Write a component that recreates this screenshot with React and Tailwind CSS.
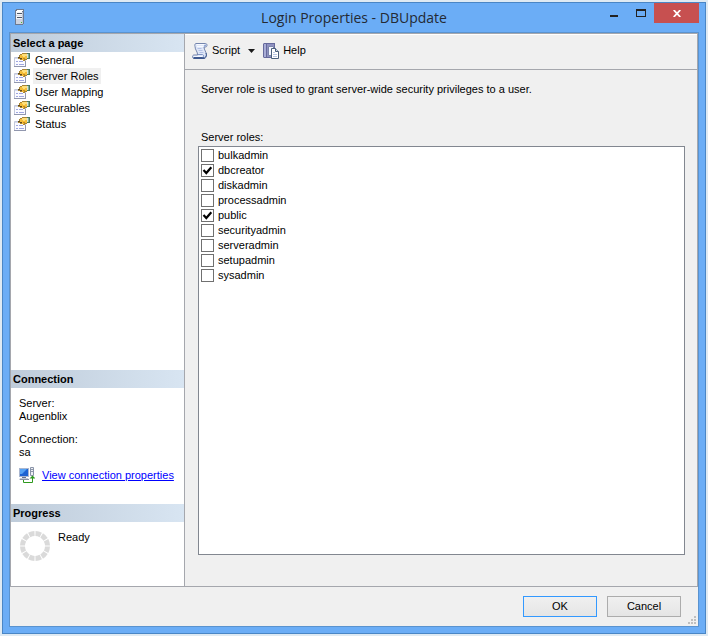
import React, { useState } from 'react';

const PAGES = ['General', 'Server Roles', 'User Mapping', 'Securables', 'Status'];

const ROLES = [
  'bulkadmin',
  'dbcreator',
  'diskadmin',
  'processadmin',
  'public',
  'securityadmin',
  'serveradmin',
  'setupadmin',
  'sysadmin',
];

function ServerIcon() {
  return (
    <svg width="9" height="16" viewBox="0 0 9 16" aria-hidden="true">
      <path d="M1 0h8v15H8v1H0V1h1z" fill="#6b7a92" />
      <path d="M2 1h6v1H7v1H1V2h1z" fill="#ffffff" />
      <path d="M1 3h6v12H1z" fill="#f1f3f8" />
      <path d="M7 3h1v12H7z" fill="#bcc5d4" />
      <path d="M2 4.500h5M2 8.500h5" stroke="#4d5768" />
      <path d="M1 6.500h6" stroke="#d5dae4" />
      <path d="M1 10h6v5H1z" fill="#cdd3e0" />
      <path d="M6 13h1v1H6z" fill="#46b52f" />
    </svg>
  );
}

function PageIcon() {
  return (
    <svg width="16" height="16" viewBox="0 0 16 16" aria-hidden="true" className="shrink-0">
      <path d="M.5 5.500h11v9H.5z" fill="#fbfbff" stroke="#c3c8da" />
      <path d="M0 14.500h12M11.500 9v6" stroke="#9197ae" />
      <path d="M1 6h4v1H1z" fill="#d5daf0" />
      <path d="M2 9.500h2M2 12.500h2" stroke="#9fa7e0" />
      <path d="M5 9.500h4M5 12.500h5" stroke="#9fa7e0" />
      <path d="M5 3h1V2h2V1h5v7h-2v1H9V8H6V7H4V5h1z" fill="#a98534" />
      <path d="M6 3h2V2h5v5h-3v1H8V7H6z" fill="#f4bd38" />
      <path d="M8 2h5v2h-2v1H9V4H8z" fill="#ffdf78" />
      <path d="M4 5h2v1H4zM6 6h2v1H6z" fill="#5d4a1c" />
      <path d="M9 6h2v1H9z" fill="#c98c1b" />
      <path d="M13 1h3v6h-3z" fill="#4b7a60" />
      <path d="M13 2h1v4h-1z" fill="#d5e4d8" />
      <path d="M14 2h1v4h-1z" fill="#86ae96" />
    </svg>
  );
}

function ScriptIcon() {
  return (
    <svg width="16" height="16" viewBox="0 0 16 16" aria-hidden="true">
      <path
        d="M4 .5h9.500c2 0 2 3.500 0 3.500h-1.500c0 3 2.500 5 2.500 8 0 2-1 3.500-2.500 3.500H2c-2 0-2-3.500 0-3.500h3.500C6 9 3 7 3 3.500 2.500 2 3 .5 4 .5z"
        fill="#dfe7f8"
        stroke="#7485ad"
      />
      <path d="M4.500 1.500h8M5 3.500h6" stroke="#f8faff" />
      <path d="M13 1.500c1.500 0 1.500 2 0 2h-1v-1z" fill="#8fa4d2" />
      <path d="M5.500 5.500h4M6.500 7.500h4M7.500 9.500h4" stroke="#b3c1e6" />
      <path d="M2 13.500h8" stroke="#f4f7ff" />
      <path d="M1.500 15h11" stroke="#3d588f" strokeWidth="2" />
      <path d="M6 11.500h4.500c1.500.5 1.500 2 .5 3" fill="none" stroke="#7f94c4" />
      <path d="M14 10c.8 2 .3 4-1.500 5" fill="none" stroke="#3d588f" />
    </svg>
  );
}

function HelpIcon() {
  return (
    <svg width="16" height="16" viewBox="0 0 16 16" aria-hidden="true">
      <path d="M0 1l1-1h11v14l-1 1H1l-1-1z" fill="#666a9c" />
      <path d="M1 1h2v13H1z" fill="#a9add6" />
      <path d="M4 1h7v13H4z" fill="#8f91c0" />
      <path d="M5.500 3.500h5v9h-5z" fill="#f4f7ff" stroke="#7b85ab" />
      <path d="M8.500 5.500h4l3 3v7h-7z" fill="#ffffff" stroke="#4b5f7c" />
      <path d="M12.500 5.500v3h3" fill="#ccd7ea" stroke="#4b5f7c" />
      <path d="M10 9.500h2M10 11.500h4M10 13.500h4" stroke="#b9c6e4" />
    </svg>
  );
}

function ConnectionIcon() {
  return (
    <svg width="16" height="16" viewBox="0 0 16 16" aria-hidden="true" className="shrink-0">
      <path d="M0 1h10v9H0z" fill="#a9b6d0" />
      <path d="M1 2h8v7H1z" fill="#1c62d2" />
      <path d="M1 2h7L3 7H1z" fill="#55a2f4" />
      <path d="M3 10h4v1H3z" fill="#68748c" />
      <path d="M1 11h8l1 2H0z" fill="#c3cad8" />
      <path d="M1 12.500h9" stroke="#8791a5" />
      <path d="M11.500.5h3v8h-3z" fill="#eef0f5" stroke="#8a94a8" />
      <path d="M12 2.500h2M12 4.500h2" stroke="#8d97aa" />
      <path d="M4.500 13v2.500h9V10" fill="none" stroke="#2f9a1e" />
      <path d="M10.500 11.500l3-3 3 3z" fill="#2f9a1e" />
    </svg>
  );
}

function ProgressRing() {
  return (
    <svg width="30" height="30" viewBox="0 0 30 30" aria-hidden="true" className="shrink-0">
      <circle
        cx="15"
        cy="15"
        r="12.500"
        fill="none"
        stroke="#dadada"
        strokeWidth="5"
        pathLength="120"
        strokeDasharray="8.400 1.600"
        strokeDashoffset="-0.800"
      />
    </svg>
  );
}

function SectionHeader({ children }) {
  return (
    <h2 className="flex h-[18px] items-center bg-linear-to-r from-[#bfccda] to-[#d8e5f2] pl-[2px] text-[11px] font-bold">
      {children}
    </h2>
  );
}

function TitleBar() {
  return (
    <header className="grid h-[29px] grid-cols-[1fr_auto_1fr] items-start">
      <div className="pt-[6px] pl-[6px]">
        <ServerIcon />
      </div>
      <h1 className="pt-1 font-['Open_Sans',sans-serif] text-[14px] leading-[22px] text-[#242a33]">
        Login Properties - DBUpdate
      </h1>
      <div className="flex justify-end">
        <button type="button" aria-label="Minimize" className="flex h-5 w-[27px] items-center justify-center">
          <svg width="8" height="10" viewBox="0 0 8 10">
            <path d="M0 7h8v2H0z" fill="#222222" />
          </svg>
        </button>
        <button type="button" aria-label="Maximize" className="flex h-5 w-[27px] items-center justify-center">
          <svg width="10" height="8" viewBox="0 0 10 8">
            <path d="M0 0h10v8H0zM1 2v5h8V2z" fill="#222222" fillRule="evenodd" />
          </svg>
        </button>
        <button
          type="button"
          aria-label="Close"
          className="flex h-5 w-[45px] items-center justify-center bg-[#c75050]"
        >
          <svg width="8" height="7" viewBox="0 0 8 7">
            <path d="M.7 0l6.600 7M7.300 0L.7 7" stroke="#ffffff" strokeWidth="1.800" />
          </svg>
        </button>
      </div>
    </header>
  );
}

function Sidebar({ page, setPage }) {
  return (
    <aside className="flex w-[174px] shrink-0 flex-col border-r border-[#a5a7ad] bg-white">
      <SectionHeader>Select a page</SectionHeader>
      <nav className="flex flex-1 flex-col pl-[3px]">
        {PAGES.map((name) => (
          <button
            key={name}
            type="button"
            onClick={() => setPage(name)}
            className="flex h-4 items-center gap-[3px] text-left"
          >
            <PageIcon />
            <span className={name === page ? 'bg-[#f0f0f0] px-[2px] leading-4' : 'px-[2px] leading-4'}>{name}</span>
          </button>
        ))}
      </nav>

      <SectionHeader>Connection</SectionHeader>
      <div className="h-[116px] pt-[9px] pl-2 leading-[13px]">
        <p>Server:</p>
        <p>Augenblix</p>
        <p className="mt-[10px]">Connection:</p>
        <p>sa</p>
        <div className="mt-2 flex items-center gap-[7px]">
          <ConnectionIcon />
          <a href="#connection" className="text-[#0000ff] underline">
            View connection properties
          </a>
        </div>
      </div>

      <SectionHeader>Progress</SectionHeader>
      <div className="flex h-16 items-start gap-2 pt-[9px] pl-[9px]">
        <ProgressRing />
        <span className="leading-[13px]">Ready</span>
      </div>
    </aside>
  );
}

function RoleItem({ name, checked, onToggle }) {
  return (
    <li>
      <label className="flex h-[15px] items-center gap-1">
        <span className="grid">
          <input
            type="checkbox"
            checked={checked}
            onChange={onToggle}
            className="col-start-1 row-start-1 size-[13px] appearance-none border border-[#707070] bg-white"
          />
          {checked && (
            <svg width="13" height="13" viewBox="0 0 13 13" className="pointer-events-none col-start-1 row-start-1">
              <path d="M2.500 6l2.800 3L10.300 3.200" fill="none" stroke="#000000" strokeWidth="2.200" />
            </svg>
          )}
        </span>
        {name}
      </label>
    </li>
  );
}

export default function App() {
  const [page, setPage] = useState('Server Roles');
  const [selected, setSelected] = useState(['dbcreator', 'public']);

  const toggleRole = (role) => {
    setSelected(selected.includes(role) ? selected.filter((r) => r !== role) : [...selected, role]);
  };

  return (
    <div className="flex min-h-screen bg-[#dfeaf3] p-[2px] font-['Liberation_Sans',Arial,sans-serif] text-[11px] text-black">
      <div className="flex flex-1 flex-col border border-[#4a86c5] bg-[#6badf6] px-[6px] pb-[6px]">
        <TitleBar />

        <div className="flex flex-1 flex-col border border-[#5a93cf] bg-[#f0f0f0]">
          <div className="flex flex-1 border border-[#a5a7ad]">
            <Sidebar page={page} setPage={setPage} />

            <main className="flex min-w-0 flex-1 flex-col">
              <div className="flex h-9 items-center border-t border-b border-t-white border-b-[#a5a7ad] pb-[3px] pl-[7px]">
                <button type="button" className="flex items-center gap-1">
                  <ScriptIcon />
                  Script
                </button>
                <button type="button" aria-label="Script options" className="flex w-[23px] justify-center">
                  <svg width="7" height="4" viewBox="0 0 7 4">
                    <path d="M0 0h7L3.500 4z" fill="#1a1a1a" />
                  </svg>
                </button>
                <button type="button" className="flex items-center gap-1">
                  <HelpIcon />
                  Help
                </button>
              </div>

              <div className="flex flex-1 flex-col pt-3 pr-3 pb-[31px] pl-[13px]">
                <p className="pl-[3px] leading-[14px]">
                  Server role is used to grant server-wide security privileges to a user.
                </p>
                <h2 id="roles-label" className="mt-[34px] pl-[3px] leading-[14px]">
                  Server roles:
                </h2>
                <ul
                  aria-labelledby="roles-label"
                  className="mt-[2px] flex-1 border border-[#828790] bg-white pt-px pl-[2px]"
                >
                  {ROLES.map((role) => (
                    <RoleItem
                      key={role}
                      name={role}
                      checked={selected.includes(role)}
                      onToggle={() => toggleRole(role)}
                    />
                  ))}
                </ul>
              </div>
            </main>
          </div>

          <footer className="relative flex h-[39px] justify-end gap-[10px] pt-[9px] pr-[17px]">
            <button
              type="button"
              className="h-[21px] w-[74px] border border-[#3399ff] bg-linear-to-b from-[#f0f0f0] to-[#e5e5e5]"
            >
              OK
            </button>
            <button
              type="button"
              className="h-[21px] w-[74px] border border-[#acacac] bg-linear-to-b from-[#f0f0f0] to-[#e5e5e5]"
            >
              Cancel
            </button>
            <svg width="8" height="8" viewBox="0 0 8 8" className="absolute right-[2px] bottom-[2px]" aria-hidden="true">
              <path d="M6 0h2v2H6zM3 3h2v2H3zM6 3h2v2H6zM0 6h2v2H0zM3 6h2v2H3zM6 6h2v2H6z" fill="#bfbfbf" />
            </svg>
          </footer>
        </div>
      </div>
    </div>
  );
}
